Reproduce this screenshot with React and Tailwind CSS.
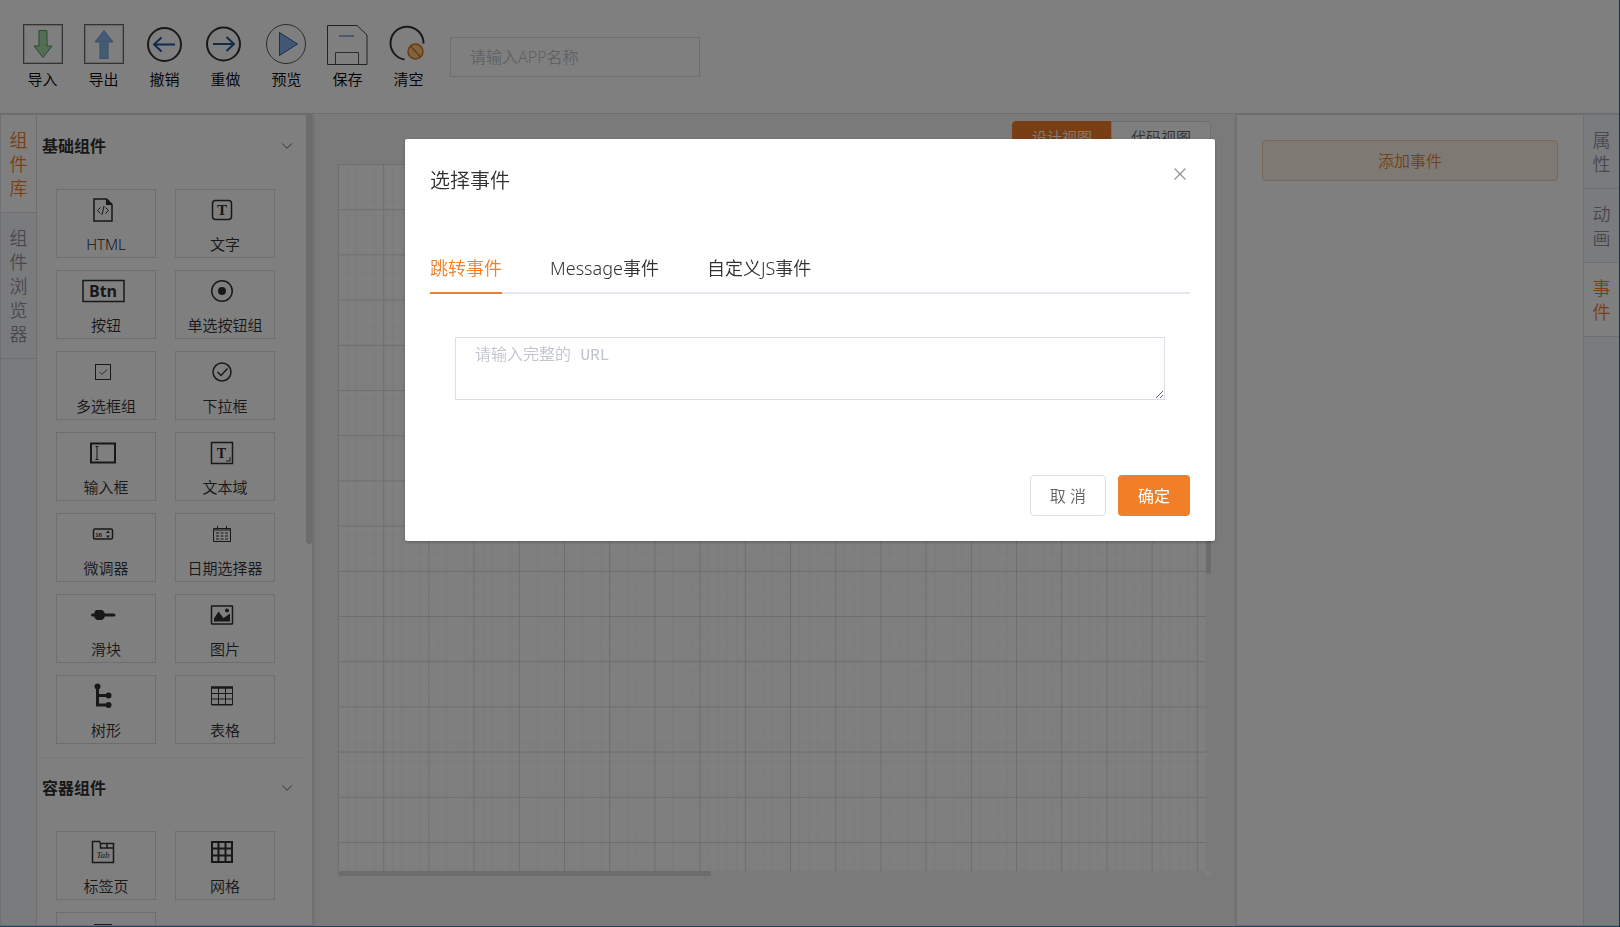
import { useState } from "react";
import clsx from "clsx";
import { X, ChevronDown } from "lucide-react";

const toolbar = [
  {
    name: "导入",
    icon: (
      <>
        <rect x="0.5" y="0.5" width="39" height="39" stroke="#666" />
        <rect x="1.5" y="1.5" width="37" height="37" stroke="#d0d0d0" />
        <path d="M16 6.5h8v15.5h5L20 33.5 11 22h5z" fill="#a9dcac" stroke="#4f9a58" />
      </>
    ),
  },
  {
    name: "导出",
    icon: (
      <>
        <rect x="0.5" y="0.5" width="39" height="39" stroke="#666" />
        <rect x="1.5" y="1.5" width="37" height="37" stroke="#d0d0d0" />
        <path d="M20 6.5 29 18h-5v16.5h-8V18h-5z" fill="#8cb4e6" stroke="#6a9bd6" />
      </>
    ),
  },
  {
    name: "撤销",
    icon: (
      <>
        <circle cx="19.5" cy="20.5" r="16.5" stroke="#333" strokeWidth="2" />
        <path d="M30 20.500H9M16.500 13.500 9 20.500l7.500 7" stroke="#23569b" strokeWidth="2" />
      </>
    ),
  },
  {
    name: "重做",
    icon: (
      <>
        <circle cx="17.5" cy="20" r="16.5" stroke="#333" strokeWidth="2" />
        <path d="M7 20H28M20.500 13 28 20l-7.500 7" stroke="#23569b" strokeWidth="2" />
      </>
    ),
  },
  {
    name: "预览",
    icon: (
      <>
        <circle cx="19" cy="20" r="19.5" stroke="#555" />
        <path d="M12.500 8.500v23L30.500 20z" fill="#84afe4" stroke="#2d62a8" />
      </>
    ),
  },
  {
    name: "保存",
    icon: (
      <>
        <path d="M-0.500 1.500h29.500l10 9.500v29.500h-39.500z" stroke="#444" />
        <path d="M7.500 40V28.500h23V40" stroke="#555" />
        <path d="M11 12h15" stroke="#6f9fdb" strokeWidth="1.5" />
      </>
    ),
  },
  {
    name: "清空",
    icon: (
      <>
        <path d="M34.500 19.500A16.500 16.500 0 1 0 15.500 35.500" stroke="#333" strokeWidth="2" />
        <circle cx="26.500" cy="27.500" r="7.500" fill="#f8cb82" stroke="#e0701a" strokeWidth="1.5" />
        <path d="M21.500 22l10 11" stroke="#e0701a" strokeWidth="1.5" />
      </>
    ),
  },
];

const basicItems = [
  {
    name: "HTML",
    icon: (
      <>
        <path d="M13 5h12.500L31 10.500V27H13z" strokeWidth="1.5" />
        <path d="M25.500 5v5.500H31z" fill="currentColor" />
        <path d="M19.500 13.500 16.500 16.500l3 3M24.500 13.500l3 3-3 3M23 12l-2 9" />
      </>
    ),
  },
  {
    name: "文字",
    icon: (
      <>
        <rect x="12.500" y="6.500" width="19" height="19" rx="3" strokeWidth="1.5" />
        <text x="22" y="21" textAnchor="middle" className="fill-current stroke-none font-['Liberation_Serif'] text-[15px] font-bold">T</text>
      </>
    ),
  },
  {
    name: "按钮",
    icon: (
      <>
        <rect x="2" y="5.500" width="41" height="21" strokeWidth="1.500" />
        <text x="22" y="22" textAnchor="middle" className="fill-current stroke-none font-['Open_Sans'] text-[16px] font-bold">Btn</text>
      </>
    ),
  },
  {
    name: "单选按钮组",
    icon: (
      <>
        <circle cx="22" cy="16" r="10.250" strokeWidth="1.5" />
        <circle cx="22" cy="16" r="4" fill="currentColor" stroke="none" />
      </>
    ),
  },
  {
    name: "多选框组",
    icon: (
      <>
        <rect x="14.500" y="8.500" width="15" height="15" />
        <path d="m18.500 16 2.500 2.500 5-5" stroke="#555" />
      </>
    ),
  },
  {
    name: "下拉框",
    icon: (
      <>
        <circle cx="22" cy="16" r="9" strokeWidth="1.5" />
        <path d="m17.500 16 3.500 3.500 6.500-7" strokeWidth="1.500" />
      </>
    ),
  },
  {
    name: "输入框",
    icon: (
      <>
        <rect x="10" y="6.500" width="24" height="19" strokeWidth="2" />
        <path d="M14.500 9.500h3M14.500 22.500h3M16 9.500v13" />
      </>
    ),
  },
  {
    name: "文本域",
    icon: (
      <>
        <rect x="11.500" y="5.500" width="21" height="21" strokeWidth="1.500" />
        <text x="21.500" y="21" textAnchor="middle" className="fill-current stroke-none font-['Liberation_Serif'] text-[14px] font-bold">T</text>
        <path d="M30 20v4h-4" />
      </>
    ),
  },
  {
    name: "微调器",
    icon: (
      <>
        <rect x="12.500" y="11" width="19" height="10" rx="1.500" strokeWidth="1.500" />
        <text x="17.500" y="18.500" textAnchor="middle" className="fill-current stroke-none font-['Liberation_Sans'] text-[6px] font-bold">16</text>
        <path d="m27 12.500 2 2.500h-4zM27 20l2-2.500h-4z" fill="currentColor" stroke="none" />
      </>
    ),
  },
  {
    name: "日期选择器",
    icon: (
      <>
        <path d="M13.500 10.500h17v13h-17zM17.500 8v3.500M26.500 8v3.500M13.500 12h17" />
        <path d="M16 15h3M20.500 15h3M25 15h3M16 18h3M20.500 18h3M25 18h3M16 21h3M20.500 21h3M25 21h3" />
      </>
    ),
  },
  {
    name: "滑块",
    icon: (
      <>
        <path d="M11.500 16h21.500" strokeWidth="3" strokeLinecap="round" />
        <path d="M15 11h6l2.500 2v6L21 21h-5l-2.500-2v-6z" fill="currentColor" stroke="none" />
      </>
    ),
  },
  {
    name: "图片",
    icon: (
      <>
        <rect x="11.500" y="7" width="21" height="18" rx="0.500" strokeWidth="1.500" />
        <path d="M14 22.500v-3l4.500-7 5 6.500 3-2 3.500 -2.500v8z" fill="currentColor" stroke="none" />
        <circle cx="27" cy="11.500" r="2" fill="currentColor" stroke="none" />
      </>
    ),
  },
  {
    name: "树形",
    icon: (
      <>
        <path d="M16.500 6v19h11M16.500 15.500h11" strokeWidth="3" />
        <circle cx="16.500" cy="6.500" r="3" fill="currentColor" stroke="none" />
        <circle cx="27.500" cy="15.500" r="3" fill="currentColor" stroke="none" />
        <circle cx="27.500" cy="25" r="3" fill="currentColor" stroke="none" />
      </>
    ),
  },
  {
    name: "表格",
    icon: (
      <>
        <path d="M11.500 7v18h21V7M11.500 24.500h21M18.500 7v18M25.500 7v18M11.500 13.500h21M11.500 19h21" />
        <path d="M11 7.500h22" strokeWidth="2.500" />
      </>
    ),
  },
];

const containerItems = [
  {
    name: "标签页",
    icon: (
      <>
        <path d="M11.500 26.500v-21h7l1 2h13v19zM19.500 7.500v4.500h13M26 7.500V12" strokeWidth="1.5" />
        <text x="22" y="22" textAnchor="middle" className="fill-current stroke-none font-['Liberation_Serif'] text-[9px] italic">Tab</text>
      </>
    ),
  },
  {
    name: "网格",
    icon: <path d="M12 6h20v20H12zM18.500 6v20M25.500 6v20M12 12.500h20M12 19.500h20" strokeWidth="2" />,
  },
  {
    name: "",
    icon: <path d="M14 8h16v15H14z" strokeWidth="2" />,
  },
];

const leftTabs = ["组件库", "组件浏览器"];
const rightTabs = ["属性", "动画", "事件"];
const eventTabs = ["跳转事件", "Message事件", "自定义JS事件"];

function SideTabs({ tabs, active, onChange, className }) {
  return (
    <nav className={clsx("flex w-9 shrink-0 flex-col border-[#dcdfe6] bg-[#f5f7fa]", className)}>
      {tabs.map((tab) => (
        <button
          key={tab}
          onClick={() => onChange(tab)}
          className={clsx(
            "border-b border-[#dcdfe6] px-2 pt-[13px] pb-3 text-[18px] leading-6 break-all",
            tab === active ? "bg-white text-[#f07f28]" : "text-[#909399]"
          )}
        >
          {tab}
        </button>
      ))}
    </nav>
  );
}

function Section({ title, items }) {
  return (
    <section className="border-b border-[#ebeef5]">
      <button className="flex h-[59px] w-full items-center justify-between pr-2.5 pl-[5px] text-[#303133]">
        <span className="text-[16px] font-bold">{title}</span>
        <ChevronDown className="size-4.5" strokeWidth={1} />
      </button>
      <div className="grid grid-cols-[100px_100px] gap-x-[19px] gap-y-3 pt-3.5 pb-[13px] pl-[19px]">
        {items.map((item) => (
          <button
            key={item.name}
            className="flex h-[69px] flex-col items-center border border-[#ddd] pt-1 text-[#303133]"
          >
            <svg viewBox="0 0 44 32" fill="none" stroke="currentColor" className="mr-1.5 h-8 w-11 shrink-0">
              {item.icon}
            </svg>
            <span className="mt-2 text-[15px] leading-5">{item.name}</span>
          </button>
        ))}
      </div>
    </section>
  );
}

function Canvas() {
  return (
    <div className="grid min-h-0 flex-1 grid-cols-[1fr_5px] grid-rows-[1fr_5px]">
      <svg className="h-full w-full bg-white">
        <defs>
          <pattern id="minor" width="9.04" height="9.04" patternUnits="userSpaceOnUse">
            <path d="M9.040 0H0V9.040" fill="none" stroke="#efefef" strokeWidth="1" />
          </pattern>
          <pattern id="major" width="45.2" height="45.2" patternUnits="userSpaceOnUse">
            <rect width="45.2" height="45.2" fill="url(#minor)" />
            <path d="M45.200 0.500H0.500V45.200" fill="none" stroke="#dcdcdc" strokeWidth="1" />
          </pattern>
        </defs>
        <rect width="100%" height="100%" fill="url(#major)" />
      </svg>
      <div>
        <div className="h-[58%] rounded-full bg-[#d8d8d8]" />
      </div>
      <div>
        <div className="h-full w-[43%] rounded-full bg-[#d8d8d8]" />
      </div>
      <div className="bg-white" />
    </div>
  );
}

function EventDialog({ onClose }) {
  const [tab, setTab] = useState(eventTabs[0]);
  const [url, setUrl] = useState("");

  return (
    <div className="fixed inset-0 flex items-start justify-center bg-black/50 pt-[15vh]">
      <div
        role="dialog"
        aria-labelledby="dialog-title"
        className="w-1/2 rounded-xs bg-white px-[25px] pb-[25px] shadow-[0_1px_3px_rgba(0,0,0,0.3)]"
      >
        <div className="flex justify-between pt-[25px]">
          <h2 id="dialog-title" className="text-[20px] leading-[34px] text-[#303133]">选择事件</h2>
          <button onClick={onClose} aria-label="关闭" className="h-5 text-[#909399]">
            <X className="size-5" strokeWidth={1.5} />
          </button>
        </div>

        <div role="tablist" className="mt-[47px] flex gap-12 border-b-2 border-[#e4e7ed]">
          {eventTabs.map((name) => (
            <button
              key={name}
              role="tab"
              aria-selected={name === tab}
              onClick={() => setTab(name)}
              className={clsx(
                "-mb-0.5 h-[49px] border-b-2 text-[18px]",
                name === tab ? "border-[#f07f28] text-[#f07f28]" : "border-transparent text-[#303133]"
              )}
            >
              {name}
            </button>
          ))}
        </div>

        <div className="px-[25px] pt-[43px]">
          <textarea
            aria-label="URL"
            value={url}
            onChange={(e) => setUrl(e.target.value)}
            placeholder="请输入完整的 URL"
            className="block h-[63px] w-full resize-y border border-[#dcdfe6] px-[19px] py-1.5 font-['Liberation_Mono','Noto_Sans_CJK_SC',monospace] text-[16px] leading-6 text-[#606266] placeholder:text-[#c0c4cc]"
          />
        </div>

        <div className="mt-[75px] flex justify-end gap-3">
          <button
            onClick={onClose}
            className="h-[41px] rounded-sm border border-[#dcdfe6] px-[19px] text-[16px] text-[#606266]"
          >
            取 消
          </button>
          <button onClick={onClose} className="h-[41px] rounded-sm bg-[#f07f28] px-5 text-[16px] font-normal text-white">
            确定
          </button>
        </div>
      </div>
    </div>
  );
}

export default function App() {
  const [leftTab, setLeftTab] = useState("组件库");
  const [rightTab, setRightTab] = useState("事件");
  const [view, setView] = useState("设计视图");
  const [appName, setAppName] = useState("");
  const [open, setOpen] = useState(true);

  return (
    <div className="flex h-screen flex-col overflow-hidden border-r border-b border-r-[#3856a0] border-b-[#2f88b8] bg-[#f5f5f5] font-['Noto_Sans','Noto_Sans_CJK_SC',sans-serif] font-[350]">
      {/* Toolbar */}
      <header className="flex h-[114px] shrink-0 items-start border-b border-[#dcdfe6] bg-white pl-3">
        {toolbar.map((tool) => (
          <button key={tool.name} className="flex w-[61px] flex-col items-center pt-6 text-black">
            <svg viewBox="0 0 40 40" fill="none" className="size-10 overflow-visible">
              {tool.icon}
            </svg>
            <span className="mt-[3px] text-[15px] leading-6">{tool.name}</span>
          </button>
        ))}
        <input
          aria-label="APP名称"
          value={appName}
          onChange={(e) => setAppName(e.target.value)}
          placeholder="请输入APP名称"
          className="mt-[37px] ml-[11px] h-10 w-[250px] border border-[#dcdfe6] px-[19px] text-[16px] text-[#606266] placeholder:text-[#c0c4cc]"
        />
      </header>

      <div className="flex min-h-0 flex-1">
        {/* Component library */}
        <aside className="flex w-[313px] shrink-0 border border-[#dcdfe6] bg-white shadow-[0_2px_4px_rgba(0,0,0,0.12),0_0_6px_rgba(0,0,0,0.04)]">
          <SideTabs tabs={leftTabs} active={leftTab} onChange={setLeftTab} className="border-r" />
          <div className="min-w-0 flex-1 overflow-hidden pt-px">
            <Section title="基础组件" items={basicItems} />
            <Section title="容器组件" items={containerItems} />
          </div>
          <div className="w-1.5 shrink-0">
            <div className="h-[53%] rounded-b-full bg-[#d8d8d8]" />
          </div>
        </aside>

        {/* Design canvas */}
        <main className="flex min-w-0 flex-1 flex-col px-[25px] pt-[7px] pb-[50px]">
          <div className="mb-[11px] flex h-8 shrink-0 justify-end text-[15px]">
            {["设计视图", "代码视图"].map((name) => (
              <button
                key={name}
                onClick={() => setView(name)}
                className={clsx(
                  "border px-[19px] first:rounded-l-sm last:-ml-px last:rounded-r-sm",
                  name === view
                    ? "border-[#f07f28] bg-[#f07f28] text-white"
                    : "border-[#dcdfe6] bg-white text-[#606266]"
                )}
              >
                {name}
              </button>
            ))}
          </div>
          <Canvas />
        </main>

        {/* Properties */}
        <aside className="flex w-[383px] shrink-0 border border-r-0 border-[#dcdfe6] bg-white shadow-[0_2px_4px_rgba(0,0,0,0.12),0_0_6px_rgba(0,0,0,0.04)]">
          <div className="flex-1 p-[25px]">
            <button
              onClick={() => setOpen(true)}
              className="h-[41px] w-full rounded-sm border border-[#f9cca9] bg-[#fef2e9] text-[16px] text-[#f07f28]"
            >
              添加事件
            </button>
          </div>
          <SideTabs tabs={rightTabs} active={rightTab} onChange={setRightTab} className="border-l" />
        </aside>
      </div>

      {open && <EventDialog onClose={() => setOpen(false)} />}
    </div>
  );
}
